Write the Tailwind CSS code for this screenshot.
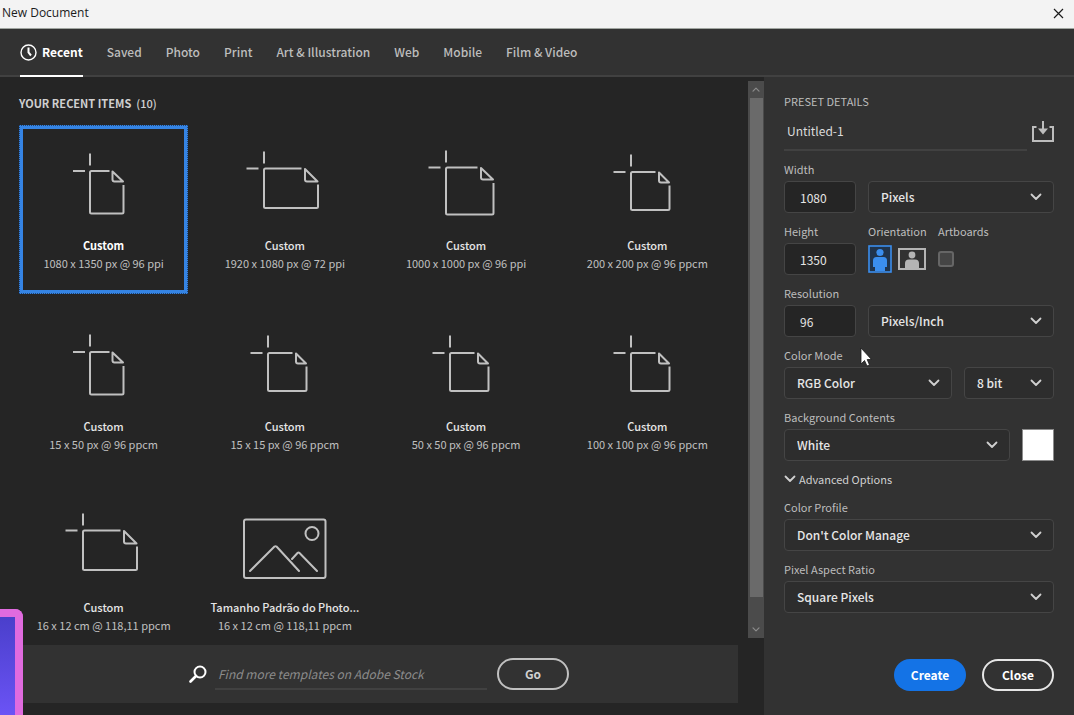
<!DOCTYPE html>
<html lang="en">
<head>
  <meta charset="UTF-8" />
  <meta name="viewport" content="width=device-width, initial-scale=1.0"/>
  <title>New Document</title>
  <script src="https://cdn.jsdelivr.net/npm/@tailwindcss/browser@4"></script>
</head>
<body class="relative h-screen flex flex-col overflow-hidden bg-[#252525] text-[#d0d0d0] font-['Noto_Sans_CJK_JP',Lato,sans-serif]">

  <!-- Shared icons -->
  <svg class="hidden">
    <symbol id="chevron" viewBox="0 0 12 8">
      <path d="M1.5 1.5 L6 6 L10.5 1.5" fill="none" stroke="currentColor" stroke-width="1.8" stroke-linecap="round" stroke-linejoin="round"/>
    </symbol>
    <symbol id="doc-portrait" viewBox="0 0 101 80">
      <path d="M37 5.5V17.5M20 23H32M56.5 23H38.5Q37 23 37 24.5V64Q37 65.5 38.5 65.5H69Q70.5 65.5 70.5 64V37M59.5 23.5V31.5Q59.5 33.5 61.5 33.5H70Z" fill="none" stroke="currentColor" stroke-width="2" stroke-linejoin="round"/>
    </symbol>
    <symbol id="doc-landscape" viewBox="0 0 101 80">
      <path d="M30 3.5V15.5M12.5 20.5H24.5M67.5 20.5H31.5Q30 20.5 30 22V58.5Q30 60 31.5 60H82.5Q84 60 84 58.5V36.5M71 21V31.5Q71 33.5 73 33.5H83.5Z" fill="none" stroke="currentColor" stroke-width="2" stroke-linejoin="round"/>
    </symbol>
    <symbol id="doc-large" viewBox="0 0 101 80">
      <path d="M30 2.5V14.5M12.5 19.5H24.5M61.5 19.5H31.5Q30 19.5 30 21V65Q30 66.5 31.5 66.5H76Q77.5 66.5 77.5 65V35M65 20V29.5Q65 31.5 67 31.5H77Z" fill="none" stroke="currentColor" stroke-width="2" stroke-linejoin="round"/>
    </symbol>
    <symbol id="doc-square" viewBox="0 0 101 80">
      <path d="M34 6.5V18.5M16.5 24H28.5M58.5 24H35.5Q34 24 34 25.5V60.5Q34 62 35.5 62H71Q72.5 62 72.5 60.5V37.5M62 24.5V32.5Q62 34.5 64 34.5H72Z" fill="none" stroke="currentColor" stroke-width="2" stroke-linejoin="round"/>
    </symbol>
    <symbol id="picture" viewBox="0 0 101 80">
      <g fill="none" stroke="currentColor" stroke-width="2" stroke-linecap="round" stroke-linejoin="round">
        <rect x="10" y="9.5" width="81.5" height="58.5" rx="2"/>
        <circle cx="78" cy="23.5" r="6.5"/>
        <path d="M16 61 L40.5 36.5Q41.5 35.8 42.5 36.5L65 61M58 49L63.5 43Q64.5 42 65.5 43L83 61"/>
      </g>
    </symbol>
  </svg>

  <!-- Title bar -->
  <header class="shrink-0 h-[29px] flex items-center justify-between pl-0.5 pr-2 pb-0.5 bg-[#f3f3f3] border-b border-[#a0a5a0] text-[#1b1b1b]">
    <h1 class="text-[12px] leading-4 font-['Open_Sans',sans-serif]">New Document</h1>
    <button aria-label="Close window" class="p-0.5">
      <svg class="w-[11px] h-[11px]" viewBox="0 0 11 11"><path d="M1 1L10 10M10 1L1 10" stroke="currentColor" stroke-width="1.2"/></svg>
    </button>
  </header>

  <!-- Tabs -->
  <nav class="shrink-0 h-12 flex gap-6 pl-5 bg-[#323232] border-b-2 border-[#414141] text-[12px] font-medium text-[#bdbdbd]">
    <a href="#" class="flex items-center gap-[5px] -mb-0.5 border-b-2 border-white font-bold text-white">
      <svg class="w-[17px] h-[17px]" viewBox="0 0 17 17" fill="none" stroke="currentColor">
        <circle cx="8.5" cy="8.5" r="7.5" stroke-width="1.4"/>
        <path d="M8.5 3.5V8.5L11 11.5" stroke-width="2"/>
      </svg>
      Recent
    </a>
    <a href="#" class="flex items-center">Saved</a>
    <a href="#" class="flex items-center">Photo</a>
    <a href="#" class="flex items-center">Print</a>
    <a href="#" class="flex items-center">Art &amp; Illustration</a>
    <a href="#" class="flex items-center">Web</a>
    <a href="#" class="flex items-center">Mobile</a>
    <a href="#" class="flex items-center">Film &amp; Video</a>
  </nav>

  <main class="flex-1 min-h-0 flex">

    <!-- Recent items -->
    <div class="flex-1 min-w-0 flex flex-col">
      <div class="flex-1 min-h-0 flex">
        <section class="flex-1 min-w-0 overflow-hidden pl-[19px] pr-4 pt-4">
          <h2 class="text-[11px] leading-5 font-bold mb-3">YOUR RECENT ITEMS &nbsp;<span class="font-medium">(10)</span></h2>
          <div class="grid grid-cols-4 gap-3 text-[11px] leading-[18px] text-[#c0c0c0] whitespace-nowrap">
            <button class="h-[169px] flex flex-col items-center pt-[19px] border-4 border-[#3584e4] outline-1 outline-dotted -outline-offset-1 outline-[#1d4476]">
              <svg class="w-[101px] h-20 shrink-0 mb-2"><use href="#doc-portrait"/></svg>
              <span class="font-bold text-white">Custom</span>
              <span>1080 x 1350 px @ 96 ppi</span>
            </button>
            <button class="h-[169px] flex flex-col items-center pt-[19px] border-4 border-transparent">
              <svg class="w-[101px] h-20 shrink-0 mb-2"><use href="#doc-landscape"/></svg>
              <span class="font-medium text-[#e6e6e6]">Custom</span>
              <span>1920 x 1080 px @ 72 ppi</span>
            </button>
            <button class="h-[169px] flex flex-col items-center pt-[19px] border-4 border-transparent">
              <svg class="w-[101px] h-20 shrink-0 mb-2"><use href="#doc-large"/></svg>
              <span class="font-medium text-[#e6e6e6]">Custom</span>
              <span>1000 x 1000 px @ 96 ppi</span>
            </button>
            <button class="h-[169px] flex flex-col items-center pt-[19px] border-4 border-transparent">
              <svg class="w-[101px] h-20 shrink-0 mb-2"><use href="#doc-square"/></svg>
              <span class="font-medium text-[#e6e6e6]">Custom</span>
              <span>200 x 200 px @ 96 ppcm</span>
            </button>
            <button class="h-[169px] flex flex-col items-center pt-[19px] border-4 border-transparent">
              <svg class="w-[101px] h-20 shrink-0 mb-2"><use href="#doc-portrait"/></svg>
              <span class="font-medium text-[#e6e6e6]">Custom</span>
              <span>15 x 50 px @ 96 ppcm</span>
            </button>
            <button class="h-[169px] flex flex-col items-center pt-[19px] border-4 border-transparent">
              <svg class="w-[101px] h-20 shrink-0 mb-2"><use href="#doc-square"/></svg>
              <span class="font-medium text-[#e6e6e6]">Custom</span>
              <span>15 x 15 px @ 96 ppcm</span>
            </button>
            <button class="h-[169px] flex flex-col items-center pt-[19px] border-4 border-transparent">
              <svg class="w-[101px] h-20 shrink-0 mb-2"><use href="#doc-square"/></svg>
              <span class="font-medium text-[#e6e6e6]">Custom</span>
              <span>50 x 50 px @ 96 ppcm</span>
            </button>
            <button class="h-[169px] flex flex-col items-center pt-[19px] border-4 border-transparent">
              <svg class="w-[101px] h-20 shrink-0 mb-2"><use href="#doc-square"/></svg>
              <span class="font-medium text-[#e6e6e6]">Custom</span>
              <span>100 x 100 px @ 96 ppcm</span>
            </button>
            <button class="h-[169px] flex flex-col items-center pt-[19px] border-4 border-transparent">
              <svg class="w-[101px] h-20 shrink-0 mb-2"><use href="#doc-landscape"/></svg>
              <span class="font-medium text-[#e6e6e6]">Custom</span>
              <span>16 x 12 cm @ 118,11 ppcm</span>
            </button>
            <button class="h-[169px] flex flex-col items-center pt-[19px] border-4 border-transparent">
              <svg class="w-[101px] h-20 shrink-0 mb-2"><use href="#picture"/></svg>
              <span class="font-medium text-[#e6e6e6]">Tamanho Padrão do Photo...</span>
              <span>16 x 12 cm @ 118,11 ppcm</span>
            </button>
          </div>
        </section>

        <!-- Scrollbar -->
        <div class="w-4 mt-1 mb-[7px] flex flex-col items-center bg-[#4b4b4b] text-[#8c8c8c]">
          <svg class="w-2 h-[17px] rotate-180"><use href="#chevron"/></svg>
          <div class="w-[13px] flex-1 bg-[#6a6a6a]"></div>
          <svg class="w-2 h-[17px] mt-6"><use href="#chevron"/></svg>
        </div>
      </div>

      <!-- Stock search -->
      <form class="shrink-0 h-[58px] mb-3 mr-[26px] pl-5 flex items-center justify-center bg-[#323232]">
        <svg class="w-[18px] h-[18px] mr-2 text-white" viewBox="0 0 18 18" fill="none" stroke="currentColor">
          <circle cx="11" cy="7" r="5.5" stroke-width="2"/>
          <path d="M7 11L1.5 16.5" stroke-width="2.6" stroke-linecap="round"/>
        </svg>
        <input type="text" aria-label="Search templates" placeholder="Find more templates on Adobe Stock" class="w-[272px] h-8 pl-[3px] mr-[10px] border-b-2 border-[#414141] text-[12px] italic placeholder:text-[#8c8c8c] outline-none"/>
        <button class="w-[72px] h-8 rounded-full border-2 border-[#c0c0c0] text-[12px] font-bold">Go</button>
      </form>
    </div>

    <!-- Preset details -->
    <aside class="w-[310px] shrink-0 flex flex-col gap-2 px-5 pt-[14px] pb-6 bg-[#323232] text-[11px] leading-5 text-[#bdbdbd]">
      <div>
        <h2>PRESET DETAILS</h2>
        <div class="h-10 flex items-center">
          <input type="text" aria-label="Preset name" value="Untitled-1" class="flex-1 min-w-0 h-full pl-[3px] border-b-2 border-[#414141] text-[12px] text-[#dcdcdc] outline-none"/>
          <button aria-label="Save preset" class="ml-[5px]">
            <svg class="w-[22px] h-[21px]" viewBox="0 0 22 21" fill="none" stroke="currentColor">
              <path d="M4.5 6H1V20H21V6H17.5" stroke-width="2"/>
              <path d="M11 0V9" stroke-width="2"/>
              <path d="M6 7.5H16L11 13.5Z" fill="currentColor" stroke="none"/>
            </svg>
          </button>
        </div>
      </div>

      <div class="flex items-end gap-3">
        <div class="flex flex-col gap-0.5">
          <label for="width">Width</label>
          <input id="width" type="text" value="1080" class="w-[72px] h-8 pl-[15px] rounded border border-[#454545] bg-[#252525] text-[12px] text-[#e6e6e6]"/>
        </div>
        <div class="relative flex-1">
          <select aria-label="Units" class="w-full h-8 pl-3 rounded border border-[#454545] bg-[#2d2d2d] appearance-none text-[12px] font-medium text-[#e6e6e6]"><option>Pixels</option></select>
          <svg class="absolute right-3 top-3 w-3 h-2 text-[#d0d0d0] pointer-events-none"><use href="#chevron"/></svg>
        </div>
      </div>

      <div class="flex gap-3">
        <div class="flex flex-col gap-0.5">
          <label for="height">Height</label>
          <input id="height" type="text" value="1350" class="w-[72px] h-8 pl-[15px] rounded border border-[#454545] bg-[#252525] text-[12px] text-[#e6e6e6]"/>
        </div>
        <div class="w-[58px] flex flex-col gap-0.5">
          <span>Orientation</span>
          <div class="h-8 flex items-center gap-1.5">
            <button aria-label="Portrait">
              <svg class="w-6 h-7" viewBox="0 0 24 28">
                <rect x="1" y="1" width="22" height="26" fill="#20344c" stroke="#3b8eed" stroke-width="1.6"/>
                <circle cx="12" cy="7.5" r="3.6" fill="#3b8eed"/>
                <path d="M8.5 12H15.5Q19 12 19 15.5V22H17V26H7V22H5V15.5Q5 12 8.5 12Z" fill="#3b8eed"/>
              </svg>
            </button>
            <button aria-label="Landscape">
              <svg class="w-7 h-6" viewBox="0 0 28 24">
                <rect x="1" y="2" width="26" height="20" fill="none" stroke="#b4b4b4" stroke-width="2"/>
                <circle cx="14" cy="8" r="3.4" fill="#b4b4b4"/>
                <path d="M11 12.5H17Q21 12.5 21 16.5V21H7V16.5Q7 12.5 11 12.5Z" fill="#b4b4b4"/>
              </svg>
            </button>
          </div>
        </div>
        <div class="flex flex-col gap-0.5">
          <label for="artboards">Artboards</label>
          <div class="h-8 flex items-center">
            <input id="artboards" type="checkbox" class="w-4 h-4 rounded-[3px] border-2 border-[#666666] bg-[#454545] appearance-none"/>
          </div>
        </div>
      </div>

      <div class="flex items-end gap-3">
        <div class="flex flex-col gap-0.5">
          <label for="resolution">Resolution</label>
          <input id="resolution" type="text" value="96" class="w-[72px] h-8 pl-[15px] rounded border border-[#454545] bg-[#252525] text-[12px] text-[#e6e6e6]"/>
        </div>
        <div class="relative flex-1">
          <select aria-label="Resolution units" class="w-full h-8 pl-3 rounded border border-[#454545] bg-[#2d2d2d] appearance-none text-[12px] font-medium text-[#e6e6e6]"><option>Pixels/Inch</option></select>
          <svg class="absolute right-3 top-3 w-3 h-2 text-[#d0d0d0] pointer-events-none"><use href="#chevron"/></svg>
        </div>
      </div>

      <div class="flex flex-col gap-0.5">
        <label for="mode">Color Mode</label>
        <div class="flex gap-3">
          <div class="relative flex-1">
            <select id="mode" class="w-full h-8 pl-3 rounded border border-[#454545] bg-[#2d2d2d] appearance-none text-[12px] font-medium text-[#e6e6e6]"><option>RGB Color</option></select>
            <svg class="absolute right-3 top-3 w-3 h-2 text-[#d0d0d0] pointer-events-none"><use href="#chevron"/></svg>
          </div>
          <div class="relative w-[90px]">
            <select aria-label="Bit depth" class="w-full h-8 pl-3 rounded border border-[#454545] bg-[#2d2d2d] appearance-none text-[12px] font-medium text-[#e6e6e6]"><option>8 bit</option></select>
            <svg class="absolute right-3 top-3 w-3 h-2 text-[#d0d0d0] pointer-events-none"><use href="#chevron"/></svg>
          </div>
        </div>
      </div>

      <div class="flex flex-col gap-0.5">
        <label for="background">Background Contents</label>
        <div class="flex gap-3">
          <div class="relative flex-1">
            <select id="background" class="w-full h-8 pl-3 rounded border border-[#454545] bg-[#2d2d2d] appearance-none text-[12px] font-medium text-[#e6e6e6]"><option>White</option></select>
            <svg class="absolute right-3 top-3 w-3 h-2 text-[#d0d0d0] pointer-events-none"><use href="#chevron"/></svg>
          </div>
          <button aria-label="Background color" class="w-8 h-8 bg-white border border-[#8c8c8c]"></button>
        </div>
      </div>

      <button class="flex items-center gap-[3px] text-[#d0d0d0]">
        <svg class="w-3 h-2"><use href="#chevron"/></svg>
        Advanced Options
      </button>

      <div class="flex flex-col gap-0.5">
        <label for="profile">Color Profile</label>
        <div class="relative">
          <select id="profile" class="w-full h-8 pl-3 rounded border border-[#454545] bg-[#2d2d2d] appearance-none text-[12px] font-medium text-[#e6e6e6]"><option>Don't Color Manage</option></select>
          <svg class="absolute right-3 top-3 w-3 h-2 text-[#d0d0d0] pointer-events-none"><use href="#chevron"/></svg>
        </div>
      </div>

      <div class="flex flex-col gap-0.5">
        <label for="aspect">Pixel Aspect Ratio</label>
        <div class="relative">
          <select id="aspect" class="w-full h-8 pl-3 rounded border border-[#454545] bg-[#2d2d2d] appearance-none text-[12px] font-medium text-[#e6e6e6]"><option>Square Pixels</option></select>
          <svg class="absolute right-3 top-3 w-3 h-2 text-[#d0d0d0] pointer-events-none"><use href="#chevron"/></svg>
        </div>
      </div>

      <div class="mt-auto flex justify-end gap-4 text-[12px] font-bold text-white">
        <button class="w-[72px] h-8 rounded-full bg-[#1473e6]">Create</button>
        <button class="w-[72px] h-8 rounded-full border-2 border-[#e6e6e6]">Close</button>
      </div>
    </aside>
  </main>

  <!-- Webcam frame in the corner -->
  <div class="absolute left-0 bottom-0 w-[23px] h-[106px] rounded-tr-lg border-t-8 border-r-8 border-[#e06bdf] bg-linear-to-b from-[#4a3fcb] to-[#6b53f5]"></div>

  <!-- Mouse pointer -->
  <svg class="absolute left-[860px] top-[347px] w-3 h-5 pointer-events-none" viewBox="0 0 12 20">
    <path d="M1 1V17L4.5 13.5L7 19L9.5 18L7.2 12.5H11.5Z" fill="#ffffff" stroke="#1a1a1a" stroke-width="0.8"/>
  </svg>

</body>
</html>
